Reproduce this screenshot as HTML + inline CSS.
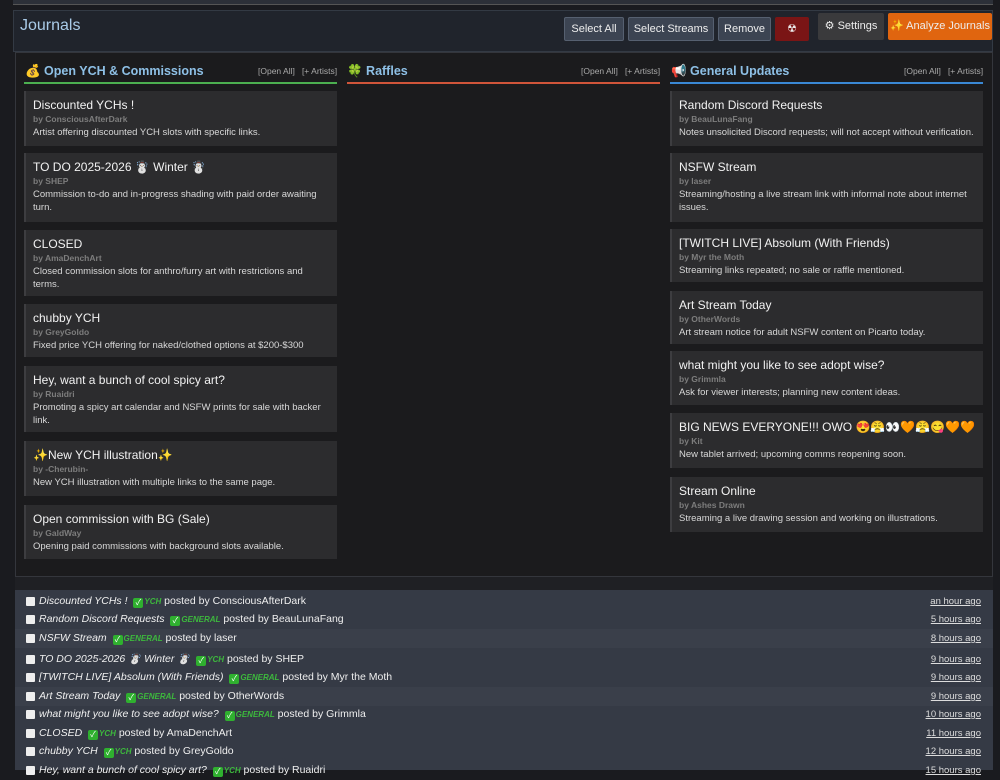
<!DOCTYPE html>
<html><head><meta charset="utf-8"><style>
*{box-sizing:border-box;margin:0;padding:0}
body{width:1000px;height:770px;overflow:hidden;background:#1a1b1f;font-family:"Liberation Sans","Noto Sans CJK JP",sans-serif;position:relative;color:#ddd}
.a{position:absolute}
.btn{position:absolute;top:17px;height:24px;background:#3c4452;border:1px solid #566070;color:#eee;font-size:11px;line-height:22px;text-align:center;border-radius:2px}
.h{position:absolute;top:64px;font-size:12.5px;font-weight:bold;color:#8ec0e6}
.lk{position:absolute;top:66px;font-size:8.5px;color:#aaa}
.ul{position:absolute;top:82px;height:2px}
.c{position:absolute;width:313px;background:#2c2c2e;border-left:2px solid #3d3d40;padding:7px 0 0 7px}
.c b{display:block;font-weight:normal;font-size:12px;color:#f2f2f2;line-height:15px}
.c i{display:block;font-style:normal;font-weight:bold;font-size:8.5px;color:#7d7d7d;line-height:13px}
.c p{font-size:9.5px;color:#d8d8d8;line-height:13px;padding-right:8px}
.r{position:absolute;left:15px;width:978px;height:19px;font-size:10.5px;color:#eee;line-height:19px}
.r .ck{position:absolute;left:11px;top:5px;width:9px;height:9px;background:#eee;border-radius:1px}
.r .t{position:absolute;left:24px}
.r em{color:#f0f0f0}
.r .g{color:#3db83d;font-style:italic;font-size:8px;font-weight:bold}
.r .gb{display:inline-block;width:10px;height:10px;background:#2fb02f;border-radius:2px;color:#fff;font-size:8px;line-height:10px;text-align:center;font-style:normal;vertical-align:-1px;margin-right:1px}
.r .tm{position:absolute;right:12px;font-size:9.5px;color:#ddd;text-decoration:underline}
</style></head><body>
<div class="a" style="left:13px;top:0;width:980px;height:5px;background:#2c3038;border-bottom:1px solid #555"></div>
<div class="a" style="left:13px;top:10px;width:980px;height:42px;background:#20242c;border:1px solid #333a44"></div>
<div class="a" style="left:20px;top:17px;font-size:16px;color:#a9cbe8">Journals</div>
<div class="btn" style="left:564px;width:60px">Select All</div>
<div class="btn" style="left:628px;width:86px">Select Streams</div>
<div class="btn" style="left:718px;width:53px">Remove</div>
<div class="btn" style="left:775px;width:34px;background:#7a1515;border-color:#7a1515">☢</div>
<div class="btn" style="left:818px;width:66px;top:13px;height:27px;line-height:25px;background:#3a3a3c;border-color:#3a3a3c">⚙ Settings</div>
<div class="btn" style="left:888px;width:104px;top:13px;height:27px;line-height:25px;background:#e0650f;border-color:#e0650f">✨ Analyze Journals</div>
<div class="a" style="left:15px;top:52px;width:978px;height:525px;background:#1b1b1d;border:1px solid #34363c"></div>
<div class="h" style="left:25px">💰 Open YCH &amp; Commissions</div>
<div class="lk" style="left:258px">[Open All] &nbsp; [+ Artists]</div>
<div class="ul" style="left:24px;width:313px;background:#4caf50"></div>
<div class="h" style="left:347px">🍀 Raffles</div>
<div class="lk" style="left:581px">[Open All] &nbsp; [+ Artists]</div>
<div class="ul" style="left:347px;width:313px;background:#d0553a"></div>
<div class="h" style="left:671px">📢 General Updates</div>
<div class="lk" style="left:904px">[Open All] &nbsp; [+ Artists]</div>
<div class="ul" style="left:670px;width:313px;background:#3a88d4"></div>

<div class="c" style="left:24px;top:91px;height:55px"><b>Discounted YCHs !</b><i>by ConsciousAfterDark</i><p>Artist offering discounted YCH slots with specific links.</p></div>
<div class="c" style="left:24px;top:153px;height:69px"><b>TO DO 2025-2026 ☃️ Winter ☃️</b><i>by SHEP</i><p>Commission to-do and in-progress shading with paid order awaiting turn.</p></div>
<div class="c" style="left:24px;top:230px;height:66px"><b>CLOSED</b><i>by AmaDenchArt</i><p>Closed commission slots for anthro/furry art with restrictions and terms.</p></div>
<div class="c" style="left:24px;top:304px;height:53px"><b>chubby YCH</b><i>by GreyGoldo</i><p>Fixed price YCH offering for naked/clothed options at $200-$300</p></div>
<div class="c" style="left:24px;top:366px;height:66px"><b>Hey, want a bunch of cool spicy art?</b><i>by Ruaidri</i><p>Promoting a spicy art calendar and NSFW prints for sale with backer link.</p></div>
<div class="c" style="left:24px;top:441px;height:55px"><b>✨New YCH illustration✨</b><i>by -Cherubin-</i><p>New YCH illustration with multiple links to the same page.</p></div>
<div class="c" style="left:24px;top:505px;height:54px"><b>Open commission with BG (Sale)</b><i>by GaldWay</i><p>Opening paid commissions with background slots available.</p></div>

<div class="c" style="left:670px;top:91px;height:55px"><b>Random Discord Requests</b><i>by BeauLunaFang</i><p style="white-space:nowrap">Notes unsolicited Discord requests; will not accept without verification.</p></div>
<div class="c" style="left:670px;top:153px;height:69px"><b>NSFW Stream</b><i>by laser</i><p>Streaming/hosting a live stream link with informal note about internet issues.</p></div>
<div class="c" style="left:670px;top:229px;height:53px"><b>[TWITCH LIVE] Absolum (With Friends)</b><i>by Myr the Moth</i><p>Streaming links repeated; no sale or raffle mentioned.</p></div>
<div class="c" style="left:670px;top:291px;height:53px"><b>Art Stream Today</b><i>by OtherWords</i><p>Art stream notice for adult NSFW content on Picarto today.</p></div>
<div class="c" style="left:670px;top:351px;height:54px"><b>what might you like to see adopt wise?</b><i>by Grimmla</i><p>Ask for viewer interests; planning new content ideas.</p></div>
<div class="c" style="left:670px;top:413px;height:55px"><b>BIG NEWS EVERYONE!!! OWO 😍😤👀🧡😤😋🧡🧡</b><i>by Kit</i><p>New tablet arrived; upcoming comms reopening soon.</p></div>
<div class="c" style="left:670px;top:477px;height:55px"><b>Stream Online</b><i>by Ashes Drawn</i><p>Streaming a live drawing session and working on illustrations.</p></div>

<div class="a" style="left:15px;top:577px;width:978px;height:13px;background:#1f2024"></div>
<div class="a" style="left:15px;top:590px;width:978px;height:180px;background:#353a45"></div>
<div class="r" style="top:592px"><span class="ck"></span><span class="t"><em>Discounted YCHs !</em> &nbsp;<span class="gb">✓</span><span class="g">YCH</span> posted by ConsciousAfterDark</span><span class="tm">an hour ago</span></div>
<div class="r" style="top:610px"><span class="ck"></span><span class="t"><em>Random Discord Requests</em> &nbsp;<span class="gb">✓</span><span class="g">GENERAL</span> posted by BeauLunaFang</span><span class="tm">5 hours ago</span></div>
<div class="r" style="top:629px;background:#3a3f4a"><span class="ck"></span><span class="t"><em>NSFW Stream</em> &nbsp;<span class="gb">✓</span><span class="g">GENERAL</span> posted by laser</span><span class="tm">8 hours ago</span></div>
<div class="r" style="top:650px"><span class="ck"></span><span class="t"><em>TO DO 2025-2026 ☃️ Winter ☃️</em> &nbsp;<span class="gb">✓</span><span class="g">YCH</span> posted by SHEP</span><span class="tm">9 hours ago</span></div>
<div class="r" style="top:668px"><span class="ck"></span><span class="t"><em>[TWITCH LIVE] Absolum (With Friends)</em> &nbsp;<span class="gb">✓</span><span class="g">GENERAL</span> posted by Myr the Moth</span><span class="tm">9 hours ago</span></div>
<div class="r" style="top:687px;background:#3a3f4a"><span class="ck"></span><span class="t"><em>Art Stream Today</em> &nbsp;<span class="gb">✓</span><span class="g">GENERAL</span> posted by OtherWords</span><span class="tm">9 hours ago</span></div>
<div class="r" style="top:705px"><span class="ck"></span><span class="t"><em>what might you like to see adopt wise?</em> &nbsp;<span class="gb">✓</span><span class="g">GENERAL</span> posted by Grimmla</span><span class="tm">10 hours ago</span></div>
<div class="r" style="top:724px"><span class="ck"></span><span class="t"><em>CLOSED</em> &nbsp;<span class="gb">✓</span><span class="g">YCH</span> posted by AmaDenchArt</span><span class="tm">11 hours ago</span></div>
<div class="r" style="top:742px"><span class="ck"></span><span class="t"><em>chubby YCH</em> &nbsp;<span class="gb">✓</span><span class="g">YCH</span> posted by GreyGoldo</span><span class="tm">12 hours ago</span></div>
<div class="r" style="top:761px"><span class="ck"></span><span class="t"><em>Hey, want a bunch of cool spicy art?</em> &nbsp;<span class="gb">✓</span><span class="g">YCH</span> posted by Ruaidri</span><span class="tm">15 hours ago</span></div>
</body></html>
